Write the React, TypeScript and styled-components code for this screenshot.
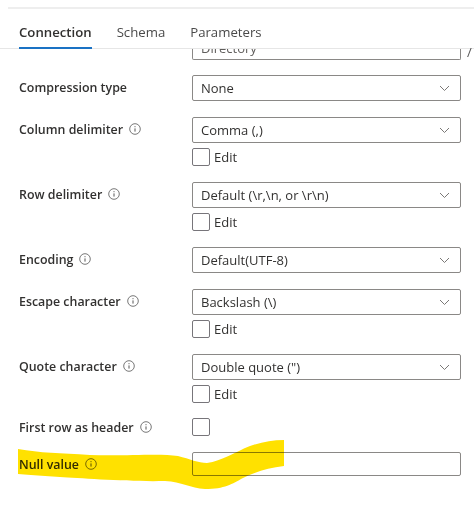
import React from "react";
import styled, { createGlobalStyle } from "styled-components";

const Global = createGlobalStyle`
  html, body { margin: 0; padding: 0; background: #fff; }
  body { font-family: "Open Sans", "Noto Sans", "Liberation Sans", sans-serif; color: #323130; }
`;

const Page = styled.div`
  position: relative;
  width: 474px;
  height: 517px;
  overflow: hidden;
  background: #fff;
`;
const TopRule = styled.div`
  height: 2px;
  margin-top: 7px;
  margin-left: 8px;
  background: #eeeeee;
`;
const TabBar = styled.div`
  display: flex;
  gap: 25px;
  height: 40px;
  padding-left: 19px;
  border-bottom: 1px solid #e6e6e6;
  box-sizing: border-box;
`;
const Tab = styled.div<{ $active?: boolean }>`
  position: relative;
  font-size: 13.2px;
  line-height: 20px;
  padding-top: 13px;
  color: ${(p) => (p.$active ? "#323130" : "#4a4a4a")};
  font-weight: ${(p) => (p.$active ? 600 : 400)};
  ${(p) =>
    p.$active
      ? `&::after { content: ""; position: absolute; left: 0; right: 0; bottom: -1px; height: 2px; background: #1a72c4; }`
      : ""}
`;
const Form = styled.div`
  height: 468px;
  overflow: hidden;
  padding: 0 13px 0 19px;
  display: flex;
  flex-direction: column;
`;
const ClippedSelect = styled.div`
  height: 11px;
  margin-left: 173px;
  margin-bottom: 15px;
  border: 1px solid #8a8886;
  border-top: none;
  border-radius: 0 0 2px 2px;
  overflow: hidden;
  font-size: 13px;
  color: #605e5c;
  padding-left: 8px;
  box-sizing: border-box;
  width: 269px;
`;
const ClippedText = styled.span`
  display: block;
  margin-top: -10px;
  line-height: 18px;
`;
const Slash = styled.span`
  position: absolute;
  left: 467px;
  top: 43px;
  font-size: 13px;
  color: #555;
`;
const Row = styled.div<{ $gap: number }>`
  display: grid;
  grid-template-columns: 173px 269px;
  margin-bottom: ${(p) => p.$gap}px;
`;
const Label = styled.div<{ $height?: number }>`
  display: flex;
  align-items: center;
  gap: 6px;
  height: ${(p) => p.$height ?? 24}px;
  font-size: 12.4px;
  font-weight: 600;
  color: #323130;
`;
const Field = styled.div`
  display: flex;
  flex-direction: column;
  gap: 5px;
`;
const SelectBox = styled.div`
  display: flex;
  align-items: center;
  justify-content: space-between;
  height: 26px;
  box-sizing: border-box;
  border: 1px solid #8a8886;
  border-radius: 2px;
  padding: 0 10px 0 8px;
  font-size: 13px;
  color: #323130;
`;
const TextBox = styled.div`
  height: 24px;
  box-sizing: border-box;
  border: 1px solid #8a8886;
  border-radius: 2px;
`;
const CheckRow = styled.div`
  display: flex;
  align-items: center;
  gap: 4px;
  height: 18px;
  font-size: 13px;
  color: #323130;
`;
const Box = styled.div`
  width: 18px;
  height: 18px;
  box-sizing: border-box;
  border: 1px solid #77757a;
  border-radius: 2px;
`;
const Highlight = styled.svg`
  position: absolute;
  left: 0;
  top: 0;
  mix-blend-mode: multiply;
  pointer-events: none;
`;

const Info = () => (
  <svg width="12" height="12" viewBox="0 0 12 12" fill="none" stroke="#555" strokeWidth="0.8">
    <circle cx="6" cy="6" r="5.3" />
    <path d="M6 5.4V8.6" strokeWidth="1" />
    <path d="M6 3.2V4.2" strokeWidth="1" />
  </svg>
);
const Chevron = () => (
  <svg width="11" height="7" viewBox="0 0 11 7" fill="none" stroke="#7a7876" strokeWidth="1">
    <path d="M1 1l4.5 4.5L10 1" />
  </svg>
);

type RowData = { label: string; info?: boolean; value: string; edit?: boolean; gap: number };
const rows: RowData[] = [
  { label: "Compression type", value: "None", gap: 16 },
  { label: "Column delimiter", info: true, value: "Comma (,)", edit: true, gap: 16 },
  { label: "Row delimiter", info: true, value: "Default (\\r,\\n, or \\r\\n)", edit: true, gap: 16 },
  { label: "Encoding", info: true, value: "Default(UTF-8)", gap: 16 },
  { label: "Escape character", info: true, value: "Backslash (\\)", edit: true, gap: 16 },
  { label: "Quote character", info: true, value: "Double quote (\")", edit: true, gap: 15 },
];

export default function App() {
  return (
    <Page>
      <Global />
      <TopRule />
      <TabBar>
        <Tab $active>Connection</Tab>
        <Tab>Schema</Tab>
        <Tab>Parameters</Tab>
      </TabBar>
      <Form>
        <ClippedSelect>
          <ClippedText>Directory</ClippedText>
        </ClippedSelect>
        {rows.map((r) => (
          <Row key={r.label} $gap={r.gap}>
            <Label>
              {r.label}
              {r.info && <Info />}
            </Label>
            <Field>
              <SelectBox>
                {r.value}
                <Chevron />
              </SelectBox>
              {r.edit && (
                <CheckRow>
                  <Box />
                  Edit
                </CheckRow>
              )}
            </Field>
          </Row>
        ))}
        <Row $gap={16}>
          <Label $height={18}>
            First row as header
            <Info />
          </Label>
          <Field>
            <Box />
          </Field>
        </Row>
        <Row $gap={0}>
          <Label $height={24}>
            Null value
            <Info />
          </Label>
          <TextBox />
        </Row>
      </Form>
      <Slash>/</Slash>
      <Highlight width="474" height="517" viewBox="0 0 474 517">
        <path
          fill="#ffe100"
          d="M18 449 C40 453 60 453 90 455 C130 456 160 453 178 456 C190 459 198 463 207 463 C222 461 235 452 250 446 C262 442 272 440 284 440 L284 466 C268 468 255 472 243 478 C232 484 225 489 205 489 C190 488 182 482 165 481 C130 482 80 478 60 477 C45 476 30 475 18 474 Z"
        />
      </Highlight>
    </Page>
  );
}
